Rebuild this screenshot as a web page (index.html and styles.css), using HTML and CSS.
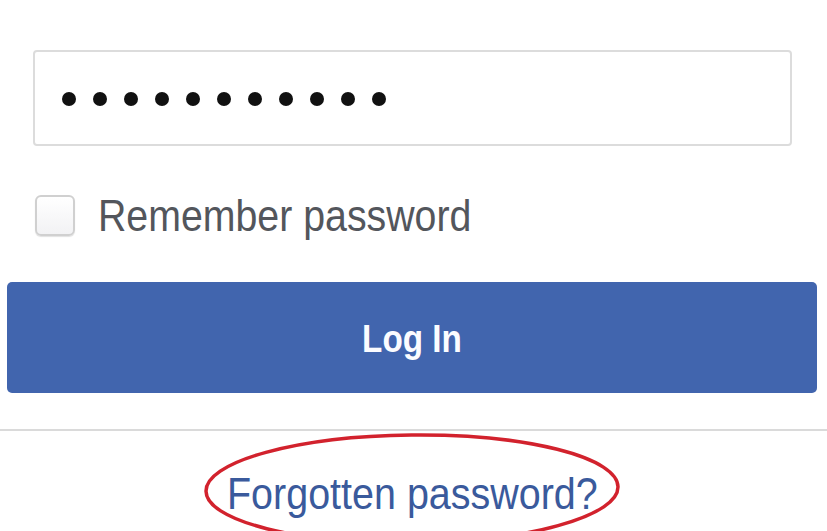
FILE: index.html
```html
<!DOCTYPE html>
<html lang="en">
<head>
<meta charset="utf-8">
<title>Log In</title>
<link rel="stylesheet" href="styles.css">
</head>
<body>
<div class="page">
  <div class="field">
    <div class="dots">
      <span class="dot"></span><span class="dot"></span><span class="dot"></span><span class="dot"></span><span class="dot"></span><span class="dot"></span><span class="dot"></span><span class="dot"></span><span class="dot"></span><span class="dot"></span><span class="dot"></span>
    </div>
  </div>
  <label class="remember">
    <span class="check"></span>
    <span class="remember-text">Remember password</span>
  </label>
  <button class="login" type="button"><span class="login-text">Log In</span></button>
  <hr class="divider">
  <div class="forgot">
    <a class="forgot-link" href="#"><span class="forgot-text">Forgotten password?</span></a>
    <svg class="ring" width="424" height="120" viewBox="0 0 424 120" aria-hidden="true">
      <ellipse cx="212" cy="58" rx="206" ry="54" fill="none" stroke="#d2222d" stroke-width="3.5" transform="rotate(-0.6 212 58)"/>
    </svg>
  </div>
</div>
</body>
</html>
```
FILE: styles.css
```css
* { box-sizing: border-box; }
html, body { margin: 0; padding: 0; background: #ffffff; }
body { font-family: "Liberation Sans", Arial, sans-serif; overflow: hidden; }

.page {
  width: 827px;
  height: 531px;
  position: relative;
  padding-top: 50px;
}

.field {
  margin-left: 33px;
  width: 759px;
  height: 96px;
  border: 2px solid #dcdcdc;
  border-radius: 4px;
  background: #fff;
  display: flex;
  align-items: center;
  padding-left: 27px;
  padding-bottom: 0;
}
.dots { display: flex; gap: 17px; margin-top: 2px; }
.dot {
  width: 14px;
  height: 14px;
  border-radius: 50%;
  background: #111;
}

.remember {
  display: flex;
  align-items: center;
  gap: 23px;
  margin: 48px 0 0 35px;
  height: 42px;
}
.check {
  width: 40px;
  height: 41px;
  border: 2px solid #d0d0d0;
  border-radius: 6px;
  background: linear-gradient(#ffffff, #f2f2f4);
  box-shadow: 0 1px 1px rgba(0,0,0,0.12);
}
.remember-text {
  display: inline-block;
  font-size: 45px;
  line-height: 45px;
  color: #53565c;
  transform: scaleX(0.873);
  transform-origin: left center;
  white-space: nowrap;
}

.login {
  display: flex;
  align-items: center;
  justify-content: center;
  margin: 46px 0 0 7px;
  width: 810px;
  height: 111px;
  border: 0;
  border-radius: 5px;
  background: #4165ae;
  padding: 0;
  font-family: inherit;
}
.login-text {
  display: inline-block;
  font-size: 38px;
  line-height: 38px;
  font-weight: bold;
  color: #fbfcff;
  transform: scaleX(0.875);
  margin-top: 2px;
}

.divider {
  margin: 36px 0 0 0;
  border: 0;
  height: 2px;
  background: #dadada;
}

.forgot {
  position: relative;
  display: flex;
  justify-content: center;
  padding-top: 40px;
  margin-right: 3px;
}
.forgot-link {
  text-decoration: none;
}
.forgot-text {
  display: inline-block;
  font-size: 45px;
  line-height: 45px;
  color: #3a5a9c;
  transform: scaleX(0.877);
  white-space: nowrap;
}
.ring {
  position: absolute;
  left: 200px;
  top: 0px;
}
```
